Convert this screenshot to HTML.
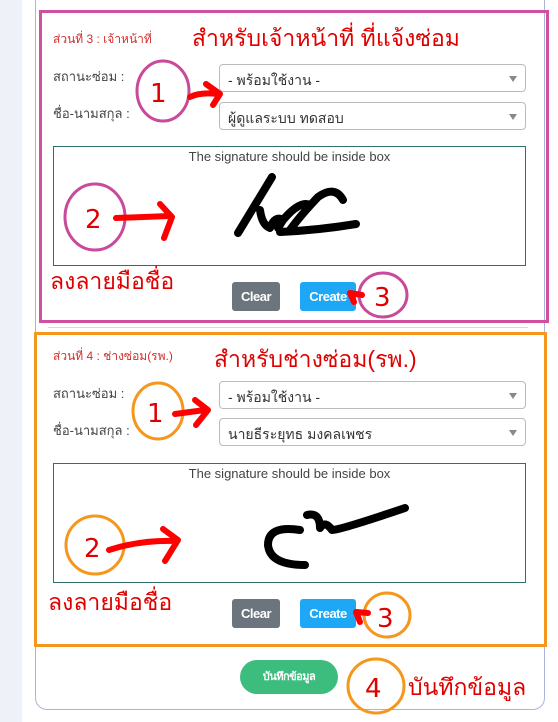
<!DOCTYPE html>
<html><head><meta charset="utf-8"><style>
*{box-sizing:border-box;margin:0;padding:0}
body{width:558px;height:722px;overflow:hidden;background:#fff;font-family:"Liberation Sans","Noto Sans CJK SC",sans-serif;position:relative}
.strip{position:absolute;left:0;top:0;width:22px;height:722px;background:#eef1f8}
.card{position:absolute;left:35px;top:-10px;width:510px;height:720px;border:1px solid #aab4d8;border-radius:12px;background:#fff}
.box{position:absolute;border:3px solid}
.a{position:absolute;white-space:nowrap}
.hd{font-size:12px;color:#d32f2f}
.big{font-size:23px;color:#e00000}
.lbl{font-size:13px;color:#444}
.sel{position:absolute;border:1px solid #bbb;border-radius:4px;height:28px;font-size:14px;color:#333;padding:5px 8px}
.sel:after{content:"";position:absolute;right:8px;top:11px;border:4px solid transparent;border-top:6px solid #888}
.sig{position:absolute;border:1px solid #2f6f6f;font-size:13px;color:#444;text-align:center;padding-top:2px}
.btn{position:absolute;height:29px;border-radius:3px;color:#fff;font-size:13px;font-weight:bold;text-align:center;line-height:29px;letter-spacing:-.5px}
</style></head><body>
<div class="strip"></div>
<div class="card"></div>
<div class="a" style="left:48px;top:327px;width:480px;height:1px;background:#f0d0d8"></div>

<div class="box" style="left:39px;top:10px;width:510px;height:313px;border-color:#d04f9f"></div>
<div class="a hd" style="left:53px;top:30px">ส่วนที่ 3 : เจ้าหน้าที่</div>
<div class="a big" style="left:192px;top:21px">สำหรับเจ้าหน้าที่ ที่แจ้งซ่อม</div>
<div class="a lbl" style="left:53px;top:66px">สถานะซ่อม :</div>
<div class="a lbl" style="left:53px;top:103px">ชื่อ-นามสกุล :</div>
<div class="sel" style="left:219px;top:64px;width:307px">- พร้อมใช้งาน -</div>
<div class="sel" style="left:219px;top:102px;width:307px">ผู้ดูแลระบบ ทดสอบ</div>
<div class="sig" style="left:53px;top:146px;width:473px;height:120px">The signature should be inside box</div>
<div class="a big" style="left:50px;top:264px">ลงลายมือชื่อ</div>
<div class="btn" style="left:232px;top:282px;width:48px;background:#6c757d">Clear</div>
<div class="btn" style="left:300px;top:282px;width:56px;background:#1ea7f5">Create</div>

<div class="box" style="left:34px;top:332px;width:513px;height:315px;border-color:#f5961d"></div>
<div class="a hd" style="left:53px;top:347px">ส่วนที่ 4 : ช่างซ่อม(รพ.)</div>
<div class="a big" style="left:214px;top:342px">สำหรับช่างซ่อม(รพ.)</div>
<div class="a lbl" style="left:53px;top:383px">สถานะซ่อม :</div>
<div class="a lbl" style="left:53px;top:420px">ชื่อ-นามสกุล :</div>
<div class="sel" style="left:219px;top:381px;width:307px">- พร้อมใช้งาน -</div>
<div class="sel" style="left:219px;top:418px;width:307px">นายธีระยุทธ มงคลเพชร</div>
<div class="sig" style="left:53px;top:463px;width:473px;height:120px">The signature should be inside box</div>
<div class="a big" style="left:48px;top:585px">ลงลายมือชื่อ</div>
<div class="btn" style="left:232px;top:599px;width:48px;background:#6c757d">Clear</div>
<div class="btn" style="left:300px;top:599px;width:56px;background:#1ea7f5">Create</div>

<div class="btn" style="left:240px;top:660px;width:98px;height:34px;line-height:34px;border-radius:17px;background:#3dbd7d;font-size:11px">บันทึกข้อมูล</div>
<div class="a big" style="left:408px;top:670px">บันทึกข้อมูล</div>

<svg width="558" height="722" style="position:absolute;left:0;top:0" fill="none">
<g stroke="#c94a9a" stroke-width="3">
<ellipse cx="163" cy="91" rx="26" ry="30"/>
<ellipse cx="95" cy="217" rx="30" ry="33"/>
<ellipse cx="383" cy="295" rx="24" ry="22"/>
</g>
<g stroke="#f5961d" stroke-width="3">
<ellipse cx="158" cy="411" rx="25" ry="28"/>
<ellipse cx="95" cy="545" rx="29" ry="29"/>
<ellipse cx="387" cy="615" rx="23" ry="22"/>
<ellipse cx="376" cy="686" rx="28" ry="27"/>
</g>
<g fill="#e00000" font-family="DejaVu Sans,sans-serif" font-weight="normal" font-size="26">
<text x="150" y="102">1</text><text x="85" y="228">2</text><text x="374" y="306">3</text>
<text x="147" y="422">1</text><text x="84" y="557">2</text><text x="377" y="627">3</text><text x="365" y="697">4</text>
</g>
<g stroke="#f00" stroke-width="6" stroke-linecap="round" stroke-linejoin="round">
<path d="M190 97 Q200 92 218 94 M206 84 L220 94 L213 105"/>
<path d="M116 218 L170 216 M160 204 L172 217 L164 238"/>
<path d="M362 295 L350 293 L354 302"/>
<path d="M175 414 L205 410 M195 400 L208 410 L196 425"/>
<path d="M109 550 Q140 540 175 541 M163 529 L178 540 L165 561"/>
<path d="M368 613 L356 612 L360 622"/>
</g>
<g stroke="#000" stroke-width="8" stroke-linecap="round" stroke-linejoin="round">
<path d="M272 177 Q255 205 238 233 M260 210 Q262 225 270 228 Q275 215 283 220 L278 228 M283 220 Q300 200 310 205 M290 230 Q300 216 318 197 Q335 185 343 200 M280 232 Q320 230 356 224"/>
<path d="M300 530 Q268 525 268 545 Q270 565 305 565 M307 515 Q320 512 320 528 Q325 520 332 530 Q340 530 405 508"/>
</g>
</svg>
</body></html>
